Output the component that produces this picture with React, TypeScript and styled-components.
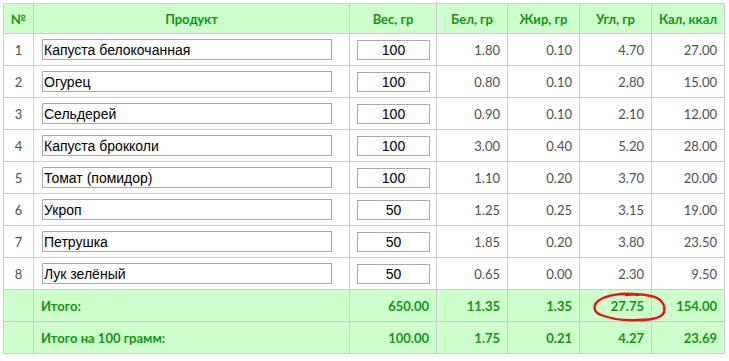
import React from "react";
import styled, { createGlobalStyle } from "styled-components";

const Global = createGlobalStyle`
  html, body { margin: 0; padding: 0; background: #fff; }
  body { font-family: Lato, "Open Sans", sans-serif; }
`;

const Page = styled.div`
  padding: 3px 0 0 3px;
`;

const Table = styled.table`
  border-collapse: collapse;
  table-layout: fixed;
  width: 721px;
  font-family: Lato, "Open Sans", sans-serif;
  font-size: 13px;
`;

const Th = styled.th<{ $w: number }>`
  width: ${(p) => p.$w}px;
  height: 30px;
  padding: 0 4px;
  box-sizing: border-box;
  border: 1px solid #cccccc;
  background: #ccffcc;
  color: #109910;
  font-weight: 700;
  text-align: center;
  white-space: nowrap;
`;

const Row = styled.tr<{ $total?: boolean }>`
  height: 32px;
  background: ${(p) => (p.$total ? "#ccffcc" : "#fff")};
`;

const Td = styled.td<{ $align?: "left" | "center" | "right"; $total?: boolean }>`
  position: relative;
  padding: 0 7px 0 7px;
  border: 1px solid #cccccc;
  text-align: ${(p) => p.$align || "right"};
  color: ${(p) => (p.$total ? "#109910" : "#505050")};
  font-weight: ${(p) => (p.$total ? 700 : 400)};
  white-space: nowrap;
`;

const NameInput = styled.input`
  display: block;
  box-sizing: border-box;
  width: 290px;
  height: 21px;
  margin: 0 0 0 1px;
  padding: 0 1px;
  border: 1px solid #a9a9a9;
  font-family: "Liberation Sans", Arial, sans-serif;
  font-size: 14px;
  font-weight: 400;
  color: #000;
  background: #fff;
  outline: none;
`;

const WeightInput = styled.input`
  display: block;
  box-sizing: border-box;
  width: 73px;
  height: 20px;
  margin: 0 auto;
  padding: 0 2px;
  border: 1px solid #a9a9a9;
  font-family: "Liberation Sans", Arial, sans-serif;
  font-size: 14px;
  font-weight: 400;
  color: #000;
  text-align: center;
  background: #fff;
  outline: none;
`;

const Circle = styled.svg`
  position: absolute;
  left: 12px;
  top: 2px;
  width: 74px;
  height: 30px;
  overflow: visible;
  pointer-events: none;
`;

const rows = [
  ["Капуста белокочанная", "100", "1.80", "0.10", "4.70", "27.00"],
  ["Огурец", "100", "0.80", "0.10", "2.80", "15.00"],
  ["Сельдерей", "100", "0.90", "0.10", "2.10", "12.00"],
  ["Капуста брокколи", "100", "3.00", "0.40", "5.20", "28.00"],
  ["Томат (помидор)", "100", "1.10", "0.20", "3.70", "20.00"],
  ["Укроп", "50", "1.25", "0.25", "3.15", "19.00"],
  ["Петрушка", "50", "1.85", "0.20", "3.80", "23.50"],
  ["Лук зелёный", "50", "0.65", "0.00", "2.30", "9.50"],
];

export default function App() {
  return (
    <Page>
      <Global />
      <Table>
        <thead>
          <tr>
            <Th $w={30}>№</Th>
            <Th $w={316}>Продукт</Th>
            <Th $w={87}>Вес, гр</Th>
            <Th $w={71}>Бел, гр</Th>
            <Th $w={72}>Жир, гр</Th>
            <Th $w={72}>Угл, гр</Th>
            <Th $w={73}>Кал, ккал</Th>
          </tr>
        </thead>
        <tbody>
          {rows.map((r, i) => (
            <Row key={i}>
              <Td $align="center">{i + 1}</Td>
              <Td $align="left">
                <NameInput defaultValue={r[0]} />
              </Td>
              <Td $align="center">
                <WeightInput defaultValue={r[1]} />
              </Td>
              <Td>{r[2]}</Td>
              <Td>{r[3]}</Td>
              <Td>{r[4]}</Td>
              <Td>{r[5]}</Td>
            </Row>
          ))}
          <Row $total>
            <Td $total />
            <Td $total $align="left">Итого:</Td>
            <Td $total>650.00</Td>
            <Td $total>11.35</Td>
            <Td $total>1.35</Td>
            <Td $total>
              27.75
              <Circle viewBox="0 0 74 30">
                <path
                  d="M46 3 C32 0 14 3 6 9 C1 13 1 20 9 23 C20 27 32 29 46 28 C60 28 70 26 72 20 C74 13 69 6 59 4 C51 2 42 2 34 3"
                  fill="none"
                  stroke="#ee1111"
                  strokeWidth="2.4"
                  strokeLinecap="round"
                />
              </Circle>
            </Td>
            <Td $total>154.00</Td>
          </Row>
          <Row $total>
            <Td $total />
            <Td $total $align="left">Итого на 100 грамм:</Td>
            <Td $total>100.00</Td>
            <Td $total>1.75</Td>
            <Td $total>0.21</Td>
            <Td $total>4.27</Td>
            <Td $total>23.69</Td>
          </Row>
        </tbody>
      </Table>
    </Page>
  );
}
